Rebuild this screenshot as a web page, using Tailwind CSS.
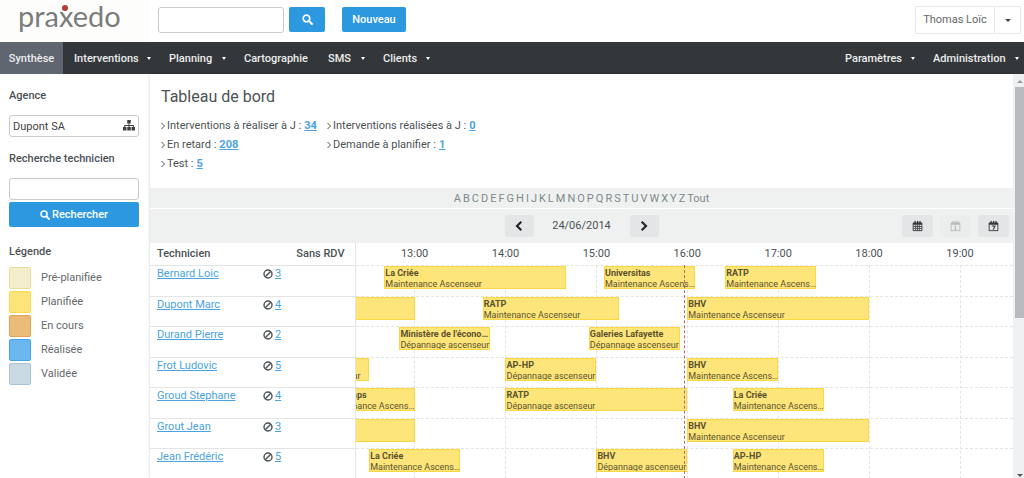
<!DOCTYPE html>
<html lang="fr">
<head>
<meta charset="utf-8">
<meta name="viewport" content="width=device-width, initial-scale=1">
<title>Praxedo - Tableau de bord</title>
<script src="https://cdn.jsdelivr.net/npm/@tailwindcss/browser@4"></script>
</head>
<body class="flex h-screen flex-col overflow-hidden bg-white font-['Roboto',sans-serif] text-[11px] text-[#4c5256]">

<svg class="hidden" aria-hidden="true">
  <symbol id="search" viewBox="0 0 16 16"><circle cx="6.5" cy="6.5" r="4.8" fill="none" stroke="currentColor" stroke-width="2.4"/><path d="M10.3 10.3 14.4 14.4" stroke="currentColor" stroke-width="3" stroke-linecap="round"/></symbol>
  <symbol id="ban" viewBox="0 0 16 16"><circle cx="8" cy="8" r="6.4" fill="none" stroke="currentColor" stroke-width="2.2"/><path d="M3.6 12.4 12.4 3.6" stroke="currentColor" stroke-width="2.2"/></symbol>
  <symbol id="cal" viewBox="0 0 16 16"><path fill="currentColor" fill-rule="evenodd" d="M2 3h1.5V1.4a1 1 0 0 1 2 0V3h1.6V1.4a1 1 0 0 1 2 0V3h1.5V1.4a1 1 0 0 1 2 0V3H14a1 1 0 0 1 1 1v10.500a1 1 0 0 1-1 1H2a1 1 0 0 1-1-1V4a1 1 0 0 1 1-1ZM2.300 6v8.300h11.400V6Z"/></symbol>
</svg>

<header class="flex h-[42px] shrink-0 items-center">
  <a href="#" aria-label="praxedo" class="relative h-full w-[150px] shrink-0 bg-[#fdfdfb] pl-[18px] font-['Lato',sans-serif] text-[29px] leading-8 text-[#7b7d7c]">praxedo<span class="absolute left-[62px] top-[5px] size-[6px] rounded-full bg-[#b23a38]"></span></a>
  <form class="flex items-center gap-[5px] pb-[3px] pl-2" onsubmit="return false">
    <input type="text" aria-label="Rechercher" class="h-[26px] w-[126px] rounded-[3px] border border-[#c9cbcc] bg-white px-1 outline-none">
    <button aria-label="Lancer la recherche" class="flex h-[25px] w-9 items-center justify-center rounded-[2px] bg-[#2b98e0] text-white"><svg class="size-[11px]"><use href="#search"/></svg></button>
  </form>
  <button class="mb-[3px] ml-[17px] h-[25px] w-16 rounded-[2px] bg-[#2b98e0] pt-px font-medium text-white">Nouveau</button>
  <div class="mb-[2px] ml-auto mr-[3px] flex h-7 w-[106px] items-stretch border border-[#e7e8e8]">
    <button class="flex-1 pt-px text-[#63686b]">Thomas Loïc</button>
    <button aria-label="Menu utilisateur" class="flex w-[26px] items-center justify-center border-l border-[#e7e8e8]"><span class="border-x-[3px] border-t-[3px] border-x-transparent border-t-[#3c4144]"></span></button>
  </div>
</header>

<nav class="flex h-8 shrink-0 items-stretch bg-[#33373a] font-medium leading-4 text-[#eceded]">
  <a href="#" class="flex w-[63px] items-center justify-center bg-[#5f6670] pt-px">Synthèse</a>
  <a href="#" class="flex w-[88px] items-center justify-between pl-[11px] pt-px">Interventions<span class="border-x-2 border-t-[3px] border-x-transparent border-t-white"></span></a>
  <a href="#" class="flex w-[75px] items-center justify-between pl-[18px] pt-px">Planning<span class="border-x-2 border-t-[3px] border-x-transparent border-t-white"></span></a>
  <a href="#" class="flex w-[84px] items-center pl-[18px] pt-px">Cartographie</a>
  <a href="#" class="flex w-[55px] items-center justify-between pl-[18px] pt-px">SMS<span class="border-x-2 border-t-[3px] border-x-transparent border-t-white"></span></a>
  <a href="#" class="flex w-[65px] items-center justify-between pl-[18px] pt-px">Clients<span class="border-x-2 border-t-[3px] border-x-transparent border-t-white"></span></a>
  <a href="#" class="ml-auto flex w-[70px] items-center justify-between pt-px">Paramètres<span class="border-x-2 border-t-[3px] border-x-transparent border-t-white"></span></a>
  <a href="#" class="mr-[5px] flex w-[104px] items-center justify-between pl-[18px] pt-px">Administration<span class="border-x-2 border-t-[3px] border-x-transparent border-t-white"></span></a>
</nav>

<div class="flex min-h-0 flex-1">
  <aside class="w-[150px] shrink-0 pl-[9px] pr-[11px] pt-[14px]">
    <label for="agence" class="block h-[27px] font-medium leading-4">Agence</label>
    <div class="relative">
      <input id="agence" type="text" value="Dupont SA" class="h-[22px] w-full rounded-[3px] border border-[#c9cbcc] px-[3px] text-[#3f4447] outline-none">
      <svg class="absolute right-1 top-[5px] h-[11px] w-3" viewBox="0 0 24 22" fill="#3c4043"><rect x="8.500" y="0" width="7" height="7"/><rect x="0" y="14" width="7" height="7"/><rect x="8.500" y="14" width="7" height="7"/><rect x="17" y="14" width="7" height="7"/><path d="M11 7h2v3h8.500v4h-2v-2H13v2h-2v-2H4.500v2h-2v-4H11z"/></svg>
    </div>
    <label for="tech" class="mt-[14px] block h-[27px] font-medium leading-4">Recherche technicien</label>
    <input id="tech" type="text" class="block h-[22px] w-full rounded-[3px] border border-[#c9cbcc] px-1 outline-none">
    <button class="mt-[2px] flex h-[25px] w-full items-center justify-center gap-[2px] rounded-[2px] bg-[#2b98e0] pt-px font-medium text-white"><svg class="size-2.5"><use href="#search"/></svg>Rechercher</button>
    <h2 class="mt-[17px] font-medium leading-4">Légende</h2>
    <ul class="mt-[7px] flex flex-col gap-[2px] text-[#65696c]">
      <li class="flex items-center gap-2.5"><span class="size-[22px] rounded-[2px] border border-[#e9df9c] bg-[#f4eecd]"></span><span class="pt-px">Pré-planifiée</span></li>
      <li class="flex items-center gap-2.5"><span class="size-[22px] rounded-[2px] border border-[#fbd94a] bg-[#fde57a]"></span><span class="pt-px">Planifiée</span></li>
      <li class="flex items-center gap-2.5"><span class="size-[22px] rounded-[2px] border border-[#dfa35a] bg-[#ebbb78]"></span><span class="pt-px">En cours</span></li>
      <li class="flex items-center gap-2.5"><span class="size-[22px] rounded-[2px] border border-[#45a5ea] bg-[#6bb7f0]"></span><span class="pt-px">Réalisée</span></li>
      <li class="flex items-center gap-2.5"><span class="size-[22px] rounded-[2px] border border-[#a9c2d4] bg-[#c8d9e2]"></span><span class="pt-px">Validée</span></li>
    </ul>
  </aside>

  <main class="min-w-0 flex-1 overflow-hidden shadow-[0_0_3px_rgba(0,0,0,0.2)]">
    <section class="h-[114px] pl-[11px] pt-[13px]">
      <h1 class="text-base leading-5">Tableau de bord</h1>
      <div class="mt-[9px] grid grid-cols-[166px_auto] justify-start whitespace-nowrap leading-[19px]">
        <p class="flex items-center gap-[2px]"><svg class="h-2 w-1" viewBox="0 0 4 8" fill="none" stroke="currentColor"><path d="m.5 1 3 3-3 3"/></svg>Interventions à réaliser à J : <a href="#" class="ml-px font-bold text-[#4aa3e0] underline">34</a></p>
        <p class="flex items-center gap-[2px]"><svg class="h-2 w-1" viewBox="0 0 4 8" fill="none" stroke="currentColor"><path d="m.5 1 3 3-3 3"/></svg>Interventions réalisées à J : <a href="#" class="ml-px font-bold text-[#4aa3e0] underline">0</a></p>
        <p class="flex items-center gap-[2px]"><svg class="h-2 w-1" viewBox="0 0 4 8" fill="none" stroke="currentColor"><path d="m.5 1 3 3-3 3"/></svg>En retard : <a href="#" class="ml-px font-bold text-[#4aa3e0] underline">208</a></p>
        <p class="flex items-center gap-[2px]"><svg class="h-2 w-1" viewBox="0 0 4 8" fill="none" stroke="currentColor"><path d="m.5 1 3 3-3 3"/></svg>Demande à planifier : <a href="#" class="ml-px font-bold text-[#4aa3e0] underline">1</a></p>
        <p class="flex items-center gap-[2px]"><svg class="h-2 w-1" viewBox="0 0 4 8" fill="none" stroke="currentColor"><path d="m.5 1 3 3-3 3"/></svg>Test : <a href="#" class="ml-px font-bold text-[#4aa3e0] underline">5</a></p>
      </div>
    </section>

    <div id="letters" class="flex h-[21px] items-center justify-center gap-[2px] border-b border-white bg-[#eff1f1] pt-[2px] text-[#7d898a]"></div>

    <div class="grid h-[34px] grid-cols-[1fr_auto_1fr] items-center bg-[#eff1f1] pb-px">
      <div class="col-start-2 flex items-center">
        <button aria-label="Jour précédent" class="flex h-[22px] w-[29px] items-center justify-center rounded-[2px] bg-[#e4e5e6] text-[#25282a]"><svg class="h-2.5 w-2" viewBox="0 0 8 10" fill="none" stroke="currentColor" stroke-width="2.200"><path d="M6.300.8 2 5l4.300 4.200"/></svg></button>
        <span class="w-24 pt-[2px] text-center">24/06/2014</span>
        <button aria-label="Jour suivant" class="flex h-[22px] w-[29px] items-center justify-center rounded-[2px] bg-[#e4e5e6] text-[#25282a]"><svg class="h-2.5 w-2" viewBox="0 0 8 10" fill="none" stroke="currentColor" stroke-width="2.200"><path d="M1.700.8 6 5 1.700 9.200"/></svg></button>
      </div>
      <div class="flex justify-end gap-[7px] pr-1 text-[#33373a]">
        <button aria-label="Mois" class="flex h-[22px] w-[31px] items-center justify-center rounded-[2px] bg-[#e4e5e6]"><svg class="h-3 w-[11px]" viewBox="0 0 16 16"><use href="#cal"/><path d="M5.300 6v9M8 6v9m2.700-9v9M2 8.700h12M2 11.500h12" stroke="currentColor" stroke-width="1.100"/></svg></button>
        <button aria-label="Jour" disabled class="flex h-[22px] w-[31px] items-center justify-center rounded-[2px] bg-[#ebecec] text-[#b9bbbc]"><svg class="h-3 w-[11px]" viewBox="0 0 16 16"><use href="#cal"/><path d="M6.300 8.300 8 7.400v5.500M6 12.900h4" fill="none" stroke="currentColor" stroke-width="1.400"/></svg></button>
        <button aria-label="Semaine" class="flex h-[22px] w-[31px] items-center justify-center rounded-[2px] bg-[#e4e5e6]"><svg class="h-3 w-[11px]" viewBox="0 0 16 16"><use href="#cal"/><path d="M5.500 8h4.700L7.500 13.300" fill="none" stroke="currentColor" stroke-width="1.500"/></svg></button>
      </div>
    </div>

    <div class="relative">
      <div id="hours" class="absolute bottom-0 left-[205px] right-0 top-[22px]"></div>
      <table class="relative w-full table-fixed border-collapse">
        <colgroup><col class="w-[106px]"><col class="w-[99px]"><col></colgroup>
        <thead>
          <tr class="h-[22px]">
            <th scope="col" class="p-0 pl-[7px] pt-px text-left font-medium">Technicien</th>
            <th scope="col" class="border-r border-[#e3e5e5] p-0 pr-2.5 pt-px text-right font-medium">Sans RDV</th>
            <th scope="col" class="p-0 pt-px font-normal"><div id="scale" class="relative h-4 leading-4"></div></th>
          </tr>
        </thead>
        <tbody id="rows"></tbody>
      </table>
      <div class="pointer-events-none absolute bottom-0 left-[205px] right-0 top-[22px]"><div class="absolute inset-y-0 left-[calc(217/434*100%)] border-l border-dashed border-[#b8686c]"></div></div>
    </div>
  </main>

  <div class="flex w-[11px] shrink-0 flex-col items-center bg-[#eff0f1] pb-px pl-[2px] pt-[6px]" aria-hidden="true">
    <span class="border-x-[3px] border-b-[3px] border-x-transparent border-b-[#9a9c9e]"></span>
    <span class="mt-1 h-[231px] w-full bg-[#b9babd]"></span>
    <span class="mt-auto border-x-[3px] border-t-[3px] border-x-transparent border-t-[#55585a]"></span>
  </div>
</div>

<script>
// Times are minutes after 12:21, the left edge of the 434-minute timeline.
const MA = 'Maintenance Ascenseur', DA = 'Dépannage ascenseur', MS = 'Maintenance Ascens…';
const technicians = [
  ['Bernard Loic', 3, [[19, 120, 'La Criée', MA], [164, 60, 'Universitas', MS], [244, 60, 'RATP', MS]]],
  ['Dupont Marc', 4, [[-81, 120, '', ''], [84, 90, 'RATP', MA], [219, 120, 'BHV', MA]]],
  ['Durand Pierre', 2, [[29, 60, 'Ministère de l\'écono…', DA], [154, 60, 'Galeries Lafayette', DA]]],
  ['Frot Ludovic', 5, [[-56, 65, '', DA], [99, 60, 'AP-HP', DA], [219, 60, 'BHV', MS]]],
  ['Groud Stephane', 4, [[-21, 60, 'Printemps', MS], [99, 120, 'RATP', DA], [249, 60, 'La Criée', MS]]],
  ['Grout Jean', 3, [[-81, 120, '', ''], [219, 120, 'BHV', MA]]],
  ['Jean Frédéric', 5, [[9, 60, 'La Criée', MS], [159, 60, 'BHV', DA], [249, 60, 'AP-HP', MS]]],
];
const pct = m => (m / 434 * 100) + '%';
const hours = [13, 14, 15, 16, 17, 18, 19];
const el = id => document.getElementById(id);

el('letters').innerHTML = [...'ABCDEFGHIJKLMNOPQRSTUVWXYZ', 'Tout'].map(l => `<a href="#">${l}</a>`).join('');
el('scale').innerHTML = hours.map(h => `<span class="absolute -translate-x-1/2" style="left:${pct((h - 13) * 60 + 39)}">${h}:00</span>`).join('');
el('hours').innerHTML = hours.map(h => `<span class="absolute inset-y-0 border-l border-dashed border-[#e3e4e4]" style="left:${pct((h - 13) * 60 + 39)}"></span>`).join('');
el('rows').innerHTML = technicians.map(([name, n, events]) => `
  <tr class="h-[30px] align-top odd:h-[31px]">
    <td class="border-t border-[#e3e5e5] p-0 pl-[7px] leading-4"><a href="#" class="text-[#4aa3e0] underline">${name}</a></td>
    <td class="border-r border-t border-[#e3e5e5] p-0 pl-[7px] leading-4"><span class="flex items-center gap-[2px]"><svg class="size-2.5"><use href="#ban"/></svg><a href="#" class="text-[#4aa3e0] underline">${n}</a></span></td>
    <td class="border-t border-dashed border-t-[#e3e4e4] p-0"><div class="relative h-6 overflow-hidden">${events.map(([from, len, title, type]) => `
      <div class="absolute top-0 h-[23px] overflow-y-clip whitespace-nowrap border border-[#fbd83f] bg-[#fde57a] pt-px text-[9px] leading-[11px] text-[#5c5330]" style="left:${pct(from)};width:${pct(len)}"><p class="h-[11px] font-bold">${title}</p><p>${type}</p></div>`).join('')}
    </div></td>
  </tr>`).join('');
</script>
</body>
</html>
